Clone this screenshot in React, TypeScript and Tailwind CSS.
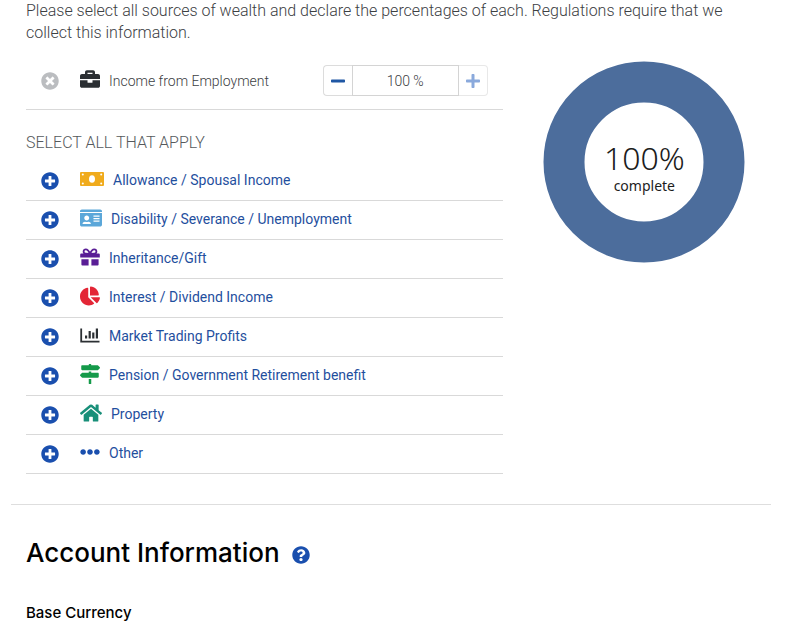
import { useState } from "react";
import type { ReactNode } from "react";
import {
  FaBriefcase,
  FaChartPie,
  FaEllipsisH,
  FaHome,
  FaIdCard,
  FaMapSigns,
  FaMinus,
  FaPlus,
  FaPlusCircle,
  FaQuestionCircle,
  FaTimesCircle,
} from "react-icons/fa";

interface Source {
  label: string;
  icon: ReactNode;
}

function MoneyIcon() {
  return (
    <svg viewBox="0 0 24 14" className="w-6 h-3.5 fill-[#f0ab1c]" aria-hidden="true">
      <rect width="24" height="14" rx="1" />
      <ellipse cx="12" cy="7" rx="3" ry="3.8" className="fill-white" />
      <g className="fill-white">
        <circle cx="2.8" cy="2.5" r="1" />
        <circle cx="21.2" cy="2.5" r="1" />
        <circle cx="2.8" cy="11.5" r="1" />
        <circle cx="21.2" cy="11.5" r="1" />
      </g>
    </svg>
  );
}

function GiftIcon() {
  return (
    <svg viewBox="0 0 20 18" className="w-5 h-[18px] fill-[#5a1e96]" aria-hidden="true">
      <path d="M1.2 5.4h17.6a1 1 0 0 1 1 1v3.2H.2V6.4a1 1 0 0 1 1-1z" />
      <path d="M1.4 11.2h7.2v6.4H2.4a1 1 0 0 1-1-1zM11.4 11.2h7.2v5.4a1 1 0 0 1-1 1h-6.2z" />
      <path
        d="M10 5.8C8.8 2.8 7.4 1.3 5.8 1.3a2.2 2.2 0 0 0 0 4.4zM10 5.8c1.2-3 2.6-4.5 4.2-4.5a2.2 2.2 0 0 1 0 4.4z"
        fill="none"
        stroke="#5a1e96"
        strokeWidth="1.8"
      />
    </svg>
  );
}

function BarsIcon() {
  return (
    <svg viewBox="0 0 20 15" className="w-5 h-[15px] fill-[#2b2f33]" aria-hidden="true">
      <path d="M.3.5h1.8v12.2h17.4v1.8H.3z" />
      <path d="M5 7.6h2.2v3H5zM8.6 3h2.2v7.6H8.6zM12.2 4.6h2.2v6h-2.2zM15.8.6H18v10h-2.2z" />
    </svg>
  );
}

const SOURCES: Source[] = [
  { label: "Allowance / Spousal Income", icon: <MoneyIcon /> },
  {
    label: "Disability / Severance / Unemployment",
    icon: <FaIdCard className="w-[22px] h-5 text-[#5ba7d9]" />,
  },
  { label: "Inheritance/Gift", icon: <GiftIcon /> },
  { label: "Interest / Dividend Income", icon: <FaChartPie className="size-5 text-[#e32636]" /> },
  { label: "Market Trading Profits", icon: <BarsIcon /> },
  {
    label: "Pension / Government Retirement benefit",
    icon: <FaMapSigns className="size-5 text-[#159a4a]" />,
  },
  { label: "Property", icon: <FaHome className="w-[22px] h-5 text-[#188f79]" /> },
  { label: "Other", icon: <FaEllipsisH className="size-5 text-[#1a4fae]" /> },
];

function SourceRow({ label, icon }: Source) {
  return (
    <li className="border-b border-[#d9d9d9]">
      <button
        type="button"
        className="flex w-full h-[38px] items-center pl-[15px] text-left text-sm text-[#1f4f9e] cursor-pointer"
      >
        <FaPlusCircle className="size-[18px] mr-[21px] text-[#1a4fae]" />
        <span className="pb-1">{icon}</span>
        <span className="pl-[9px] pb-0.5">{label}</span>
      </button>
    </li>
  );
}

function ProgressRing({ percent }: { percent: number }) {
  return (
    <div className="relative mx-auto size-[202px]">
      <svg viewBox="0 0 202 202" className="size-full" aria-hidden="true">
        <circle
          cx="101"
          cy="101"
          r="80"
          fill="none"
          stroke="#4c6d9c"
          strokeWidth="41"
          pathLength="100"
          strokeDasharray={`${percent} 100`}
          transform="rotate(-90 101 101)"
        />
      </svg>
      <div className="absolute inset-0 flex flex-col items-center justify-center pt-2 font-['Noto_Sans',sans-serif] text-[#1c1c1c]">
        <span className="text-[32px] leading-10 font-light">{percent}%</span>
        <span className="text-sm leading-4">complete</span>
      </div>
    </div>
  );
}

export default function App() {
  const [percent, setPercent] = useState(100);
  const change = (step: number) => setPercent((p) => Math.min(100, Math.max(0, p + step)));

  return (
    <main className="min-h-screen bg-white pl-[11px] pr-[21px] font-['Roboto','Liberation_Sans',sans-serif] text-[#3c4043]">
      <section className="px-[15px] pb-[30px] border-b border-[#dedede]">
        <p className="text-base leading-[22px] font-light">
          Please select all sources of wealth and declare the percentages of each. Regulations
          require that we collect this information.
        </p>
        <div className="grid grid-cols-3 gap-[30px]">
          <div className="col-span-2">
            <div className="flex items-center pt-[21px] pb-[13px] px-[15px] border-b border-[#d9d9d9] text-sm font-light">
              <button type="button" aria-label="Remove Income from Employment" className="mr-[21px]">
                <FaTimesCircle className="size-[18px] text-[#bbbdc0]" />
              </button>
              <FaBriefcase className="size-5 mb-1 text-[#2b2f33]" />
              <label htmlFor="employment" className="flex-1 pl-[9px]">
                Income from Employment
              </label>
              <div className="flex h-[31px]">
                <button
                  type="button"
                  aria-label="Decrease"
                  onClick={() => change(-1)}
                  className="flex w-[29px] items-center justify-center rounded-l border border-r-0 border-[#dcdcdc] text-[#1f57a4] cursor-pointer"
                >
                  <FaMinus className="size-4" />
                </button>
                <input
                  id="employment"
                  value={`${percent} %`}
                  readOnly
                  className="w-[107px] border border-[#d4d4d4] text-center outline-none"
                />
                <button
                  type="button"
                  aria-label="Increase"
                  onClick={() => change(1)}
                  className="flex w-[29px] items-center justify-center rounded-r border border-l-0 border-[#e8e8e8] text-[#8aa9dc] cursor-pointer"
                >
                  <FaPlus className="size-4" />
                </button>
              </div>
            </div>
            <h3 className="pt-[21px] pb-[7px] text-base font-light text-[#55595c]">
              SELECT ALL THAT APPLY
            </h3>
            <ul>
              {SOURCES.map((source) => (
                <SourceRow key={source.label} {...source} />
              ))}
            </ul>
          </div>
          <div className="pt-[17px]">
            <ProgressRing percent={percent} />
          </div>
        </div>
      </section>
      <section className="px-[15px] pt-7 font-['Inter','Liberation_Sans',sans-serif] text-black">
        <div className="flex items-center gap-3">
          <h2 className="text-[26px] leading-10 font-medium">Account Information</h2>
          <button type="button" aria-label="Help" className="pt-1">
            <FaQuestionCircle className="size-[18px] text-[#1a4fae]" />
          </button>
        </div>
        <h3 className="pt-7 text-[15px] leading-6 font-medium">Base Currency</h3>
      </section>
    </main>
  );
}
